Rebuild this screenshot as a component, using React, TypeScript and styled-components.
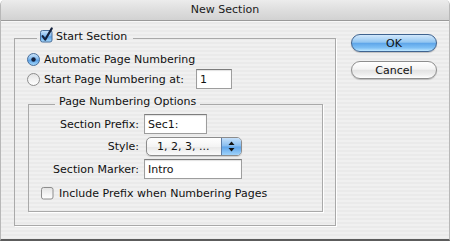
import React from "react";
import styled, { createGlobalStyle } from "styled-components";

const Global = createGlobalStyle`
  html, body { margin: 0; padding: 0; background: #ffffff; }
  body { font-family: "DejaVu Sans", "Verdana", sans-serif; font-size: 11px; color: #111; }
`;

const Window = styled.div`
  width: 450px;
  height: 241px;
  box-sizing: border-box;
  display: flex;
  flex-direction: column;
  border-left: 1px solid #b8b8b8;
  border-right: 1px solid #b8b8b8;
  border-bottom: 2px solid #5c5c5c;
  border-radius: 5px 5px 0 0;
  overflow: hidden;
  background: repeating-linear-gradient(
    to bottom,
    #f0f0f0 0px,
    #f0f0f0 2px,
    #eaeaea 2px,
    #eaeaea 4px
  );
`;

const TitleBar = styled.div`
  height: 21px;
  box-sizing: border-box;
  flex: none;
  display: flex;
  align-items: center;
  justify-content: center;
  background: linear-gradient(to bottom, #ececec 0%, #dedede 50%, #d2d2d2 100%);
  border-bottom: 1px solid #9a9a9a;
  box-shadow: 0 1px 0 #f8f8f8;
  font-size: 11px;
  line-height: 20px;
  color: #1a1a1a;
`;

const Body = styled.div`
  display: flex;
  align-items: flex-start;
  padding: 9px 0 0 13px;
`;

const Group = styled.fieldset<{ $inner?: boolean }>`
  margin: ${(p) => (p.$inner ? "6px 0 0 1px" : "0")};
  padding: ${(p) => (p.$inner ? "1px 12px 8px 12px" : "2px 12px 13px 12px")};
  width: ${(p) => (p.$inner ? "295px" : "322px")};
  box-sizing: border-box;
  min-width: 0;
  border: 1px solid #a9a9a9;
  box-shadow: 1px 1px 0 #ffffff;
`;

const Legend = styled.legend<{ $inner?: boolean }>`
  margin-left: ${(p) => (p.$inner ? "14px" : "10px")};
  padding: ${(p) => (p.$inner ? "0 4px 4px 4px" : "0 6px 4px 3px")};
  display: flex;
  align-items: center;
  gap: 3px;
  line-height: ${(p) => (p.$inner ? "14px" : "12px")};
`;

const OptionRow = styled.div<{ $indent?: number }>`
  height: 20px;
  display: flex;
  align-items: center;
  gap: 4px;
  margin-left: ${(p) => p.$indent ?? 0}px;
`;

const Form = styled.div`
  display: grid;
  grid-template-columns: 98px auto;
  grid-auto-rows: 20px;
  column-gap: 5px;
  row-gap: 2.5px;
  align-items: center;
`;

const FieldLabel = styled.div`
  text-align: right;
  white-space: nowrap;
`;

const TextField = styled.input<{ $w: number }>`
  width: ${(p) => p.$w}px;
  height: 20px;
  box-sizing: border-box;
  margin: 0;
  padding: 0 3px;
  border: 1px solid #9d9d9d;
  border-top-color: #7d7d7d;
  box-shadow: inset 0 1px 1px rgba(0, 0, 0, 0.12);
  background: #ffffff;
  font-family: "DejaVu Sans", "Verdana", sans-serif;
  font-size: 11px;
  color: #111;
  outline: none;
`;

const InlineField = styled(TextField)`
  margin-left: 8px;
`;

const Popup = styled.div`
  width: 96px;
  height: 19px;
  margin-left: 2px;
  box-sizing: border-box;
  display: flex;
  align-items: stretch;
  border: 1px solid #8c8c8c;
  border-radius: 5px;
  overflow: hidden;
  background: linear-gradient(to bottom, #ffffff 0%, #f4f4f4 50%, #e8e8e8 51%, #fafafa 100%);
  box-shadow: 0 1px 1px rgba(0, 0, 0, 0.15);
`;

const PopupText = styled.div`
  flex: 1;
  padding-left: 10px;
  line-height: 17px;
`;

const PopupCap = styled.div`
  width: 19px;
  display: flex;
  align-items: center;
  justify-content: center;
  border-left: 1px solid #5d7ea8;
  background: linear-gradient(to bottom, #c5e0fa 0%, #86bcef 48%, #5ea3e8 52%, #9fd3fb 100%);
`;

const ButtonColumn = styled.div`
  display: flex;
  flex-direction: column;
  gap: 9px;
  margin-left: 15px;
  padding-top: 4px;
`;

const Button = styled.div<{ $default?: boolean }>`
  width: 86px;
  height: 18px;
  box-sizing: border-box;
  border-radius: 9px;
  display: flex;
  align-items: center;
  justify-content: center;
  font-size: 11px;
  color: #111;
  border: 1px solid ${(p) => (p.$default ? "#3f638f" : "#8e8e8e")};
  background: ${(p) =>
    p.$default
      ? "linear-gradient(to bottom, #d2e8fc 0%, #93c6f1 45%, #5fa6e9 52%, #7ec0f5 80%, #bfe7ff 100%)"
      : "linear-gradient(to bottom, #ffffff 0%, #f3f3f3 45%, #e3e3e3 52%, #efefef 80%, #ffffff 100%)"};
  box-shadow: 0 1px 1px rgba(0, 0, 0, 0.2);
`;

const CheckRow = styled.div`
  margin-top: 4px;
  height: 20px;
  display: flex;
  align-items: center;
  gap: 5px;
`;

const Icon = styled.svg`
  flex: none;
  overflow: visible;
  display: block;
`;

const Defs = () => (
  <svg width="0" height="0" style={{ position: "absolute" }}>
    <defs>
      <linearGradient id="aqua" x1="0" y1="0" x2="0" y2="1">
        <stop offset="0" stopColor="#cde5fb" />
        <stop offset="0.45" stopColor="#84bbef" />
        <stop offset="0.55" stopColor="#5aa0e6" />
        <stop offset="1" stopColor="#a9dcfd" />
      </linearGradient>
      <linearGradient id="plain" x1="0" y1="0" x2="0" y2="1">
        <stop offset="0" stopColor="#e2e2e2" />
        <stop offset="0.5" stopColor="#f2f2f2" />
        <stop offset="1" stopColor="#ffffff" />
      </linearGradient>
    </defs>
  </svg>
);

const CheckBox = ({ checked }: { checked?: boolean }) => (
  <Icon width="13" height="13" viewBox="0 0 13 13">
    <rect
      x="0.5"
      y="0.5"
      width="11.5"
      height="11.5"
      rx="2"
      fill={checked ? "url(#aqua)" : "url(#plain)"}
      stroke={checked ? "#4b6f9a" : "#8d8d8d"}
    />
    {checked && (
      <path
        d="M2.6 6.2 L5.2 9.6 L11.8 -1.6"
        fill="none"
        stroke="#14213d"
        strokeWidth="2.1"
        strokeLinecap="round"
        strokeLinejoin="round"
      />
    )}
  </Icon>
);

const Radio = ({ checked }: { checked?: boolean }) => (
  <Icon width="13" height="13" viewBox="0 0 13 13">
    <circle
      cx="6.5"
      cy="6.5"
      r="6"
      fill={checked ? "url(#aqua)" : "url(#plain)"}
      stroke={checked ? "#4b6f9a" : "#8d8d8d"}
    />
    {checked && <circle cx="6.5" cy="6.5" r="2.2" fill="#14213d" />}
  </Icon>
);

const Arrows = () => (
  <Icon width="7" height="11" viewBox="0 0 7 11">
    <path d="M3.5 0.5 L6.5 4 L0.5 4 Z" fill="#111" />
    <path d="M3.5 10.5 L6.5 7 L0.5 7 Z" fill="#111" />
  </Icon>
);

export default function App() {
  return (
    <>
      <Global />
      <Defs />
      <Window>
        <TitleBar>New Section</TitleBar>
        <Body>
          <Group>
            <Legend>
              <CheckBox checked />
              <span>Start Section</span>
            </Legend>
            <OptionRow>
              <Radio checked />
              <span>Automatic Page Numbering</span>
            </OptionRow>
            <OptionRow>
              <Radio />
              <span>Start Page Numbering at:</span>
              <InlineField $w={36} readOnly value="1" />
            </OptionRow>
            <Group $inner>
              <Legend $inner>Page Numbering Options</Legend>
              <Form>
                <FieldLabel>Section Prefix:</FieldLabel>
                <TextField $w={63} readOnly value="Sec1:" />
                <FieldLabel>Style:</FieldLabel>
                <Popup>
                  <PopupText>1, 2, 3, ...</PopupText>
                  <PopupCap>
                    <Arrows />
                  </PopupCap>
                </Popup>
                <FieldLabel>Section Marker:</FieldLabel>
                <TextField $w={98} readOnly value="Intro" />
              </Form>
              <CheckRow>
                <CheckBox />
                <span>Include Prefix when Numbering Pages</span>
              </CheckRow>
            </Group>
          </Group>
          <ButtonColumn>
            <Button $default>OK</Button>
            <Button>Cancel</Button>
          </ButtonColumn>
        </Body>
      </Window>
    </>
  );
}
